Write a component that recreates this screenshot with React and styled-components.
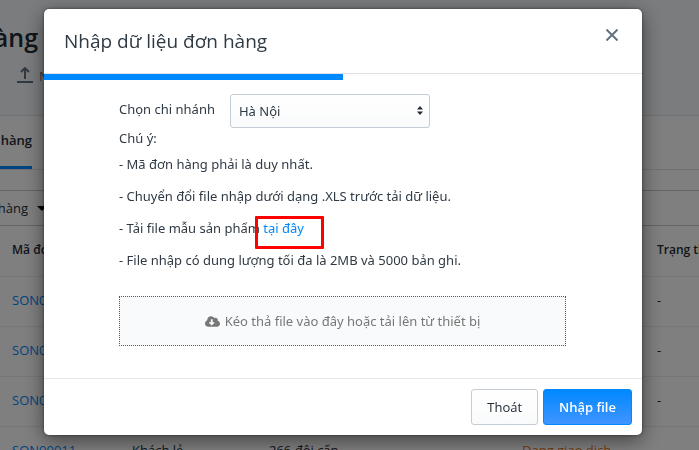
import React, { useState } from 'react';
import styled, { createGlobalStyle } from 'styled-components';
import { FaCloudDownloadAlt } from 'react-icons/fa';

const GlobalStyle = createGlobalStyle`
  * {
    box-sizing: border-box;
  }
  body {
    margin: 0;
    overflow: hidden;
    color: #212b35;
    background: #fff;
    font-family: "Open Sans", "Noto Sans", sans-serif;
    font-size: 13px;
    line-height: 20px;
  }
  button, select {
    font: inherit;
    color: inherit;
  }
  a {
    color: #0088ff;
    text-decoration: none;
  }
`

/* Orders page, scrolled a little to the right under the dialog */

const Page = styled.div`
  height: 100vh;
  overflow: hidden;
`
const PageHeader = styled.header`
  height: 116px;
  padding-top: 20px;
  background: #f6f8fa;
  border-bottom: 1px solid #dfe4e8;
`
const Clip = styled.div`
  display: flex;
  flex: none;
  justify-content: flex-end;
  width: ${props => props.$width}px;
  overflow: hidden;
  white-space: nowrap;
`
const PageTitle = styled.h1`
  margin: 0;
  font-size: 25px;
  line-height: 34px;
  font-weight: 600;
`
const ImportButton = styled.button`
  display: flex;
  align-items: center;
  gap: 6px;
  margin-top: 12px;
  padding: 0 16px;
  border: 0;
  background: none;
  color: #637381;
`
const Tabs = styled.nav`
  display: flex;
  height: 54px;
  border-bottom: 1px solid #dfe4e8;
`
const Tab = styled.a`
  padding-top: 14px;
  color: #212b35;
  font-weight: 600;
  border-bottom: 3px solid #0088ff;
`
const Filters = styled.div`
  display: flex;
  align-items: center;
  gap: 9px;
  height: 36px;
  margin-top: 20px;
  border-top: 1px solid #c4cdd5;
  border-bottom: 1px solid #c4cdd5;
`
const Caret = styled.span`
  border: 5px solid transparent;
  border-top-color: #000;
  border-bottom: 0;
`
const Orders = styled.table`
  width: 800px;
  table-layout: fixed;
  border-collapse: collapse;
  td, th {
    height: 50px;
    padding: 0 12px 2px;
    text-align: left;
    white-space: nowrap;
    border-bottom: 1px solid #ebeef0;
  }
  th {
    font-size: 12px;
    font-weight: 600;
  }
`
const Status = styled.span`
  color: #ee7a1a;
`

/* Dialog */

const Overlay = styled.div`
  position: fixed;
  inset: 0;
  display: flex;
  align-items: flex-start;
  padding: 9px 57px 0 44px;
  background: rgba(0, 0, 0, 0.5);
`
const Dialog = styled.section`
  flex: 1;
  color: #2f3a44;
  background: #fff;
  border-radius: 5px;
  box-shadow: 0 5px 20px rgba(0, 0, 0, 0.5), 0 0 3px rgba(0, 0, 0, 0.5);
`
const DialogHeader = styled.header`
  display: flex;
  justify-content: space-between;
  align-items: center;
  height: 65px;
  padding: 0 20px;
  border-bottom: 1px solid #dfe3e8;
`
const DialogTitle = styled.h2`
  margin: 0;
  font-size: 19px;
  line-height: 28px;
  font-weight: 400;
`
const CloseButton = styled.button`
  display: flex;
  margin-bottom: 12px;
  padding: 4px;
  border: 0;
  background: none;
`
const Progress = styled.div`
  height: 6px;
  div {
    height: 100%;
    background: #0088ff;
  }
`
const DialogBody = styled.div`
  padding: 14px 76px 32px 75px;
  font-family: "Noto Sans", "Open Sans", sans-serif;
`
const Field = styled.div`
  display: flex;
  gap: 15px;
  label {
    padding-top: 5px;
  }
`
const SelectBox = styled.div`
  position: relative;
  width: 200px;
  svg {
    position: absolute;
    top: 12px;
    right: 7px;
    pointer-events: none;
  }
`
const Select = styled.select`
  appearance: none;
  width: 100%;
  height: 34px;
  padding: 0 24px 0 8px;
  border: 1px solid #c4cdd5;
  border-radius: 3px;
  background: linear-gradient(to bottom, #fff, #f9fafb);
`
const Note = styled.p`
  margin: 0;
`
const NoteList = styled.ul`
  margin: 0 0 20px;
  padding: 0;
  list-style: none;
  li {
    line-height: 32px;
  }
`
const MarkedLink = styled.a`
  position: relative;
  &::after {
    content: "";
    position: absolute;
    inset: -3px -20px -12px -8px;
    border: 3px solid #ff0000;
    border-radius: 1px;
  }
`
const DropZone = styled.button`
  display: flex;
  justify-content: center;
  align-items: center;
  gap: 5px;
  width: 100%;
  height: 50px;
  border: 1px dotted #555;
  background: #f9fafb;
  color: #777;
`
const DialogFooter = styled.footer`
  display: flex;
  justify-content: flex-end;
  gap: 5px;
  padding: 10px;
  border-top: 1px solid #e5e5e5;
`
const Button = styled.button`
  height: 36px;
  padding: 0 15px;
  border: 1px solid ${props => (props.$primary ? '#0088ff' : '#c4cdd5')};
  border-radius: 3px;
  background: ${props => (props.$primary
    ? 'linear-gradient(to bottom, #0088ff, #4095ff)'
    : 'linear-gradient(to bottom, #fff, #f9fafb)')};
  color: ${props => (props.$primary ? '#fff' : '#212b35')};
  font-weight: ${props => (props.$primary ? 600 : 400)};
`

const orders = [
  { code: 'SON00014' },
  { code: 'SON00013' },
  { code: 'SON00012' },
  { code: 'SON00011', customer: 'Khách lẻ', address: '266 đội cấn', status: 'Đang giao dịch' },
];

const OrdersPage = () => (
  <Page>
    <PageHeader>
      <Clip $width={38}>
        <PageTitle>Đơn hàng</PageTitle>
      </Clip>
      <ImportButton>
        <svg width="17" height="18" viewBox="0 0 17 18" fill="none" stroke="currentColor" strokeWidth="2">
          <path d="M9 12V2M5 5l4-4 4 4M1 15h16" />
        </svg>
        Nhập file
      </ImportButton>
    </PageHeader>
    <Tabs>
      <Clip $width={32}>
        <Tab href="#all">Tất cả đơn hàng</Tab>
      </Clip>
    </Tabs>
    <Filters>
      <Clip $width={28}>
        <span>Lọc đơn hàng</span>
      </Clip>
      <Caret />
    </Filters>
    <Orders>
      <colgroup>
        <col width="120" />
        <col width="137" />
        <col width="253" />
        <col width="135" />
        <col width="155" />
      </colgroup>
      <thead>
        <tr>
          <th>Mã đơn hàng</th>
          <th />
          <th />
          <th />
          <th>Trạng thái</th>
        </tr>
      </thead>
      <tbody>
        {orders.map(order => (
          <tr key={order.code}>
            <td><a href={`#${order.code}`}>{order.code}</a></td>
            <td>{order.customer}</td>
            <td>{order.address}</td>
            <td><Status>{order.status}</Status></td>
            <td>-</td>
          </tr>
        ))}
      </tbody>
    </Orders>
  </Page>
);

const ImportDialog = () => {
  const [branch, setBranch] = useState('hanoi');
  const progress = 50;

  return (
    <Overlay>
      <Dialog role="dialog" aria-labelledby="import-title">
        <DialogHeader>
          <DialogTitle id="import-title">Nhập dữ liệu đơn hàng</DialogTitle>
          <CloseButton aria-label="Đóng">
            <svg width="12" height="12" viewBox="0 0 12 12" stroke="#637381" strokeWidth="2">
              <path d="M0.5 0.5l11 11M11.5 0.5l-11 11" />
            </svg>
          </CloseButton>
        </DialogHeader>
        <Progress>
          <div style={{ width: `${progress}%` }} />
        </Progress>
        <DialogBody>
          <Field>
            <label htmlFor="branch">Chọn chi nhánh</label>
            <SelectBox>
              <Select id="branch" value={branch} onChange={e => setBranch(e.target.value)}>
                <option value="hanoi">Hà Nội</option>
              </Select>
              <svg width="6" height="9" viewBox="0 0 6 9" fill="#212b35">
                <path d="M0 3.5L3 0l3 3.5zM0 5.5L3 9l3-3.5z" />
              </svg>
            </SelectBox>
          </Field>
          <Note>Chú ý:</Note>
          <NoteList>
            <li>- Mã đơn hàng phải là duy nhất.</li>
            <li>- Chuyển đổi file nhập dưới dạng .XLS trước tải dữ liệu.</li>
            <li>- Tải file mẫu sản phẩm <MarkedLink href="#template">tại đây</MarkedLink></li>
            <li>- File nhập có dung lượng tối đa là 2MB và 5000 bản ghi.</li>
          </NoteList>
          <DropZone>
            <FaCloudDownloadAlt size={15} />
            Kéo thả file vào đây hoặc tải lên từ thiết bị
          </DropZone>
        </DialogBody>
        <DialogFooter>
          <Button>Thoát</Button>
          <Button $primary>Nhập file</Button>
        </DialogFooter>
      </Dialog>
    </Overlay>
  );
};

const App = () => (
  <>
    <GlobalStyle />
    <OrdersPage />
    <ImportDialog />
  </>
);

export default App;
